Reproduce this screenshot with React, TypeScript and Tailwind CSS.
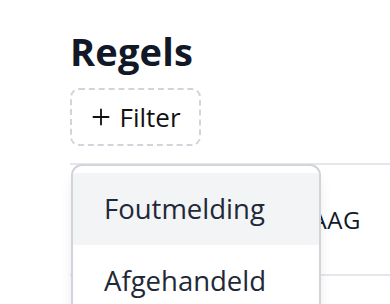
import { Plus } from 'lucide-react';

export default function App() {
  return (
    <div className="relative h-[304px] w-[390px] overflow-hidden bg-white font-['Open_Sans',sans-serif]">
      <div className="pl-[70px] pt-[26px]">
        <h1 className="text-[38px] font-bold leading-[50px] tracking-[0.2px] text-[#111827]">Regels</h1>

        <div className="relative mt-[12px]">
          <button className="flex h-[58px] w-[131px] items-center justify-center gap-[5px] rounded-[9px] border-2 border-dashed border-[#d1d5db] pr-[2px] text-[26px] text-[#111111]">
            <Plus className="h-[26px] w-[26px]" strokeWidth={1.7} />
            <span>Filter</span>
          </button>

          {/* tabel */}
          <div className="mt-[17px] border-t-2 border-[#e5e7eb]">
            <div className="flex h-[111px] items-center justify-end border-b-2 border-[#e5e7eb] pr-[29px]">
              <span className="text-[24px] font-medium tracking-wide text-[#111827]">VRAAG</span>
            </div>
          </div>

          {/* dropdown */}
          <div className="absolute left-[1px] top-[76px] z-10 w-[250px] rounded-[11px] border-2 border-[#d1d5db] bg-white pt-[7px] shadow-lg">
            <div className="flex h-[72px] items-center bg-[#f3f4f6] pl-[31px] text-[27.5px] text-[#1f2937]">
              Foutmelding
            </div>
            <div className="flex h-[72px] items-center pl-[31px] text-[27.5px] text-[#1f2937]">
              Afgehandeld
            </div>
          </div>
        </div>
      </div>
    </div>
  );
}
